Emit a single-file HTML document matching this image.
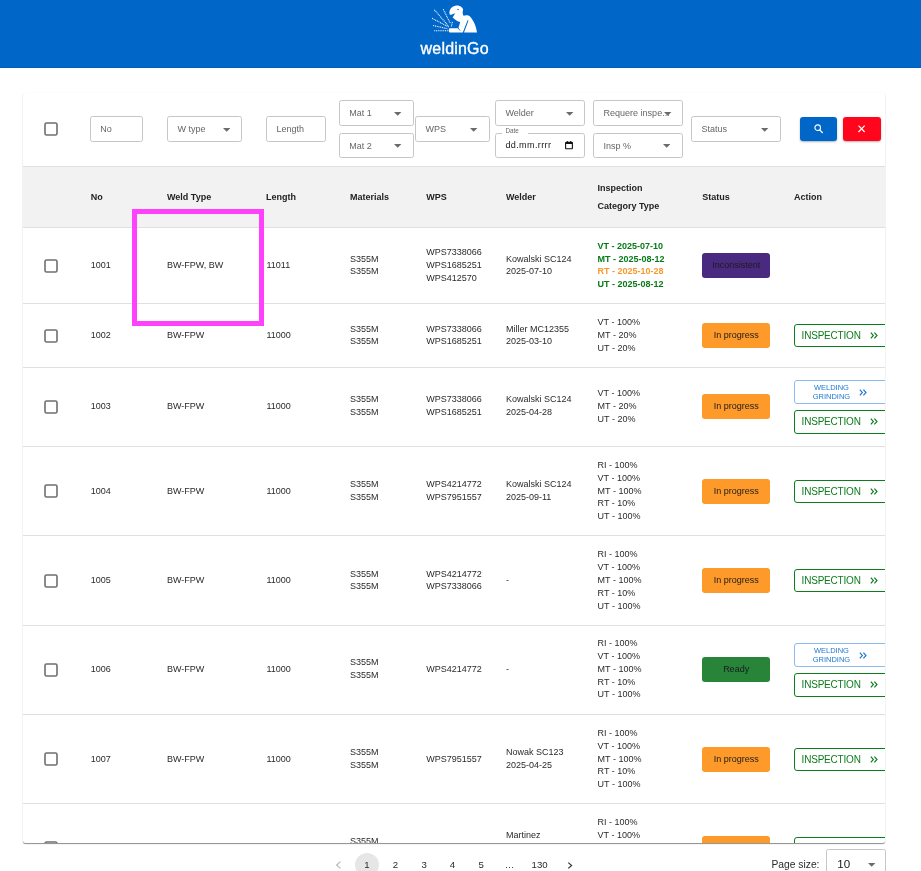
<!DOCTYPE html><html><head><meta charset="utf-8"><style>
*{box-sizing:border-box;margin:0;padding:0}
html,body{width:921px;height:871px;overflow:hidden;background:#fff;font-family:"Liberation Sans", sans-serif;color:rgba(0,0,0,0.87)}
.a{position:absolute}
.hdr{position:absolute;left:0;top:0;width:921px;height:68px;background:#0067c9;box-shadow:inset 0 -1px 0 rgba(0,0,0,0.1)}
.logo{position:absolute;left:420.6px;top:39.6px;font-size:16px;color:#fff;-webkit-text-stroke:0.35px #fff;letter-spacing:0.18px;line-height:18px}
.paper{position:absolute;left:22.5px;top:92.5px;width:862.8px;height:750.6px;border-radius:2.5px;background:#fff;overflow:hidden;
 box-shadow:0 1px 1px -0.2px rgba(0,0,0,0.45),0 0 1.5px rgba(0,0,0,0.07)}
.cb{position:absolute;width:14px;height:14px}
.inp{position:absolute;border:1px solid #c6c6c6;border-radius:2.5px;background:#fff}
.ph{position:absolute;font-size:9px;color:#666;line-height:10px;white-space:nowrap}
.arr{position:absolute;width:8px;height:4px}
.line{position:absolute;left:0;width:870px;height:1px;background:#e0e0e0}
.th{position:absolute;font-size:9px;font-weight:bold;line-height:12px;white-space:nowrap;color:#222}
.td{position:absolute;font-size:9px;line-height:12.86px;white-space:nowrap;color:#2a2a2a}
.badge{position:absolute;left:679.9px;width:67.5px;height:24.9px;border-radius:3px;font-size:9px;line-height:24.5px;text-align:center;color:#1c1c1c}
.bi{position:absolute;left:771.7px;width:110px;height:23px;border:1.2px solid #0b7d1b;border-radius:3px;color:#0b7d1b;font-size:10px;letter-spacing:-0.2px;line-height:21.6px;padding-left:6.4px;white-space:nowrap}
.bw{position:absolute;left:771.7px;width:110px;height:23.5px;border:1px solid #8dbbee;border-radius:3px;color:#1f78d1;font-size:7.5px;line-height:9px;white-space:nowrap}
.pg{position:absolute;top:859px;font-size:9.64px;line-height:12px;color:#2a2a2a;text-align:center;white-space:nowrap}
</style></head><body><div style="position:absolute;left:0;top:0;width:921px;height:871px;will-change:transform">
<div class="hdr">
<svg class="a" style="left:0;top:0" width="921" height="68" viewBox="0 0 921 68">
<g fill="#fff">
<path d="M449.6 14.2 C448.7 9.2 452.5 5.4 457.0 5.5 C460.5 5.6 462.9 7.6 463.0 10.0 L462.6 12.6 C462.8 14.0 463.2 15.3 463.6 15.8 C466.0 14.9 468.5 15.2 470.2 16.8 C473.6 20.5 476.2 26.5 477.0 32.5 L464.0 32.5 L468.5 20.6 L467.6 20.3 L462.8 32.5 L449.8 32.5 C448.6 32.2 448.2 30.2 449.4 28.3 L458.4 28.2 L460.2 22.0 C457.7 21.5 455.0 19.6 452.6 17.4 L455.2 13.2 L453.7 13.7 L451.2 14.7 C450.5 14.9 449.9 14.7 449.6 14.2 Z"/>
</g>
<circle cx="461.9" cy="9.6" r="1.05" fill="#fff"/>
<ellipse cx="458.1" cy="9.5" rx="0.9" ry="0.6" fill="#0067c9"/>
<line x1="457.8" y1="27.6" x2="460.1" y2="30.6" stroke="#0067c9" stroke-width="0.8"/>
<g stroke="#fff" stroke-width="1.05" stroke-dasharray="1.0 0.8" fill="none">
<line x1="434.4" y1="9.8" x2="448.7" y2="26.3"/>
<line x1="443.3" y1="9.3" x2="450.2" y2="23.2"/>
<line x1="432.1" y1="18.3" x2="448.7" y2="27.0"/>
<line x1="433.2" y1="25.5" x2="447.6" y2="28.8"/>
<line x1="434.2" y1="30.7" x2="448.3" y2="30.7"/>
<line x1="452.4" y1="21.9" x2="451.4" y2="26.3"/>
</g>
</svg>
<div class="logo">weldinGo</div>
</div>
<div class="paper">
<svg class="cb" style="left:21.5px;top:29.4px" viewBox="0 0 14 14"><rect x="1" y="1" width="12" height="12" rx="1.6" fill="none" stroke="#6f6f6f" stroke-width="1.6"/></svg>
<div class="inp" style="left:67.5px;top:23.1px;width:53.3px;height:26.4px"></div>
<div class="ph" style="left:77.8px;top:31.5px">No</div>
<div class="inp" style="left:144.6px;top:23.5px;width:74.9px;height:26.0px"></div>
<div class="ph" style="left:154.9px;top:31.7px">W type</div>
<svg class="arr" style="left:200.0px;top:35.2px" viewBox="0 0 8 4"><path d="M0 0 L7.4 0 L3.7 3.7 Z" fill="#6b6b6b"/></svg>
<div class="inp" style="left:243.7px;top:23.1px;width:60.0px;height:26.4px"></div>
<div class="ph" style="left:254.0px;top:31.5px">Length</div>
<div class="inp" style="left:316.4px;top:7.6px;width:75.2px;height:25.8px"></div>
<div class="ph" style="left:326.7px;top:15.7px">Mat 1</div>
<svg class="arr" style="left:371.7px;top:19.2px" viewBox="0 0 8 4"><path d="M0 0 L7.4 0 L3.7 3.7 Z" fill="#6b6b6b"/></svg>
<div class="inp" style="left:316.4px;top:40.5px;width:75.2px;height:24.8px"></div>
<div class="ph" style="left:326.7px;top:48.1px">Mat 2</div>
<svg class="arr" style="left:371.7px;top:51.6px" viewBox="0 0 8 4"><path d="M0 0 L7.4 0 L3.7 3.7 Z" fill="#6b6b6b"/></svg>
<div class="inp" style="left:392.7px;top:23.7px;width:75.0px;height:25.7px"></div>
<div class="ph" style="left:403.0px;top:31.75px">WPS</div>
<svg class="arr" style="left:447.8px;top:35.25px" viewBox="0 0 8 4"><path d="M0 0 L7.4 0 L3.7 3.7 Z" fill="#6b6b6b"/></svg>
<div class="inp" style="left:472.6px;top:7.5px;width:89.9px;height:25.8px"></div>
<div class="ph" style="left:482.9px;top:15.6px">Welder</div>
<svg class="arr" style="left:543.1px;top:19.1px" viewBox="0 0 8 4"><path d="M0 0 L7.4 0 L3.7 3.7 Z" fill="#6b6b6b"/></svg>
<div class="inp" style="left:570.8px;top:7.5px;width:89.8px;height:25.8px"></div>
<div class="ph" style="left:581.1px;top:15.6px">Requere inspe...</div>
<svg class="arr" style="left:641.2px;top:19.1px" viewBox="0 0 8 4"><path d="M0 0 L7.4 0 L3.7 3.7 Z" fill="#6b6b6b"/></svg>
<div class="inp" style="left:570.8px;top:40.8px;width:89.8px;height:24.6px"></div>
<div class="ph" style="left:581.1px;top:48.3px">Insp %</div>
<svg class="arr" style="left:640.9px;top:51.8px" viewBox="0 0 8 4"><path d="M0 0 L7.4 0 L3.7 3.7 Z" fill="#6b6b6b"/></svg>
<div class="inp" style="left:668.7px;top:23.4px;width:89.8px;height:26.0px"></div>
<div class="ph" style="left:679.0px;top:31.6px">Status</div>
<svg class="arr" style="left:738.5px;top:35.1px" viewBox="0 0 8 4"><path d="M0 0 L7.4 0 L3.7 3.7 Z" fill="#6b6b6b"/></svg>
<div class="inp" style="left:472.6px;top:40.8px;width:89.9px;height:24.6px"></div>
<div class="a" style="left:479.5px;top:39.5px;width:26px;height:3px;background:#fff"></div>
<div class="a" style="left:482.9px;top:34.9px;font-size:6.4px;line-height:7px;color:#6a6a6a">Date</div>
<div class="a" style="left:482.9px;top:47.7px;font-size:9.1px;line-height:11px;color:#222;letter-spacing:0.35px">dd.mm.rrrr</div>
<svg class="a" style="left:542.1px;top:48.9px" width="8" height="8.4" viewBox="0 0 8 8.4"><rect x="0.6" y="1.4" width="6.8" height="6.4" rx="0.6" fill="none" stroke="#111" stroke-width="1.1"/><rect x="0.6" y="1.2" width="6.8" height="1.8" fill="#111"/><rect x="1.8" y="0" width="1" height="1.6" fill="#111"/><rect x="5.2" y="0" width="1" height="1.6" fill="#111"/></svg>
<div class="a" style="left:777.6px;top:24.4px;width:36.9px;height:23.9px;background:#0067c9;border-radius:3px;box-shadow:0 1px 2px rgba(0,0,0,0.3)"></div>
<svg class="a" style="left:791.8px;top:31.3px" width="9.5" height="9.8" viewBox="0 0 9.5 9.8"><circle cx="3.7" cy="3.7" r="2.8" fill="none" stroke="#fff" stroke-width="1.1"/><line x1="5.7" y1="5.9" x2="8.7" y2="9" stroke="#fff" stroke-width="1.3"/></svg>
<div class="a" style="left:820.5px;top:24.4px;width:37.9px;height:23.9px;background:#ff061c;border-radius:3px;box-shadow:0 1px 2px rgba(0,0,0,0.3)"></div>
<svg class="a" style="left:835.9px;top:32.9px" width="7.2" height="7.6" viewBox="0 0 7.2 7.6"><path d="M0.5 0.6 L6.7 7 M6.7 0.6 L0.5 7" stroke="#fff" stroke-width="1.2"/></svg>
<div class="line" style="top:73.5px"></div>
<div class="line" style="top:134.5px"></div>
<div class="line" style="top:210.5px"></div>
<div class="line" style="top:274.5px"></div>
<div class="line" style="top:353.5px"></div>
<div class="line" style="top:442.5px"></div>
<div class="line" style="top:532.5px"></div>
<div class="line" style="top:621.5px"></div>
<div class="line" style="top:710.5px"></div>
<div class="a" style="left:0;top:74.5px;width:870px;height:60px;background:#f2f2f2"></div>
<div class="th" style="left:68.2px;top:98.68px">No</div>
<div class="th" style="left:144.5px;top:98.68px">Weld Type</div>
<div class="th" style="left:243.4px;top:98.68px">Length</div>
<div class="th" style="left:327.5px;top:98.68px">Materials</div>
<div class="th" style="left:403.8px;top:98.68px">WPS</div>
<div class="th" style="left:483.5px;top:98.68px">Welder</div>
<div class="th" style="left:575.0px;top:89.68px">Inspection</div>
<div class="th" style="left:575.0px;top:107.48px">Category Type</div>
<div class="th" style="left:679.7px;top:98.18px">Status</div>
<div class="th" style="left:771.5px;top:98.18px">Action</div>
<svg class="cb" style="left:21.5px;top:166.4px" viewBox="0 0 14 14"><rect x="1" y="1" width="12" height="12" rx="1.6" fill="none" stroke="#6f6f6f" stroke-width="1.6"/></svg>
<div class="td" style="left:68.2px;top:166.57px;">1001</div>
<div class="td" style="left:144.5px;top:166.57px;">BW-FPW, BW</div>
<div class="td" style="left:244.0px;top:166.57px;">11011</div>
<div class="td" style="left:327.5px;top:160.14px;">S355M<br>S355M</div>
<div class="td" style="left:403.8px;top:153.71px;">WPS7338066<br>WPS1685251<br>WPS412570</div>
<div class="td" style="left:483.5px;top:160.14px;">Kowalski SC124<br>2025-07-10</div>
<div class="td" style="left:575.1px;top:147.28px;font-weight:bold;"><span style="color:#077a17">VT - 2025-07-10</span><br><span style="color:#077a17">MT - 2025-08-12</span><br><span style="color:#f79a2e">RT - 2025-10-28</span><br><span style="color:#077a17">UT - 2025-08-12</span></div>
<div class="badge" style="top:160.7px;background:#4a2980">Inconsistent</div>
<svg class="cb" style="left:21.5px;top:236.4px" viewBox="0 0 14 14"><rect x="1" y="1" width="12" height="12" rx="1.6" fill="none" stroke="#6f6f6f" stroke-width="1.6"/></svg>
<div class="td" style="left:68.2px;top:236.57px;">1002</div>
<div class="td" style="left:144.5px;top:236.57px;">BW-FPW</div>
<div class="td" style="left:244.0px;top:236.57px;">11000</div>
<div class="td" style="left:327.5px;top:230.14px;">S355M<br>S355M</div>
<div class="td" style="left:403.8px;top:230.14px;">WPS7338066<br>WPS1685251</div>
<div class="td" style="left:483.5px;top:230.14px;">Miller MC12355<br>2025-03-10</div>
<div class="td" style="left:575.1px;top:223.71px;">VT - 100%<br>MT - 20%<br>UT - 20%</div>
<div class="badge" style="top:230.7px;background:#fd9a2a">In progress</div>
<div class="bi" style="top:231.5px">INSPECTION<span style="position:absolute;left:75px;top:7.3px"><svg width="8" height="7" viewBox="0 0 8 7" style="position:absolute"><path d="M0.8 0.7 L3.4 3.5 L0.8 6.3 M4.4 0.7 L7 3.5 L4.4 6.3" fill="none" stroke="#0b7d1b" stroke-width="1.15"/></svg></span></div>
<svg class="cb" style="left:21.5px;top:307.0px" viewBox="0 0 14 14"><rect x="1" y="1" width="12" height="12" rx="1.6" fill="none" stroke="#6f6f6f" stroke-width="1.6"/></svg>
<div class="td" style="left:68.2px;top:307.17px;">1003</div>
<div class="td" style="left:144.5px;top:307.17px;">BW-FPW</div>
<div class="td" style="left:244.0px;top:307.17px;">11000</div>
<div class="td" style="left:327.5px;top:300.74px;">S355M<br>S355M</div>
<div class="td" style="left:403.8px;top:300.74px;">WPS7338066<br>WPS1685251</div>
<div class="td" style="left:483.5px;top:300.74px;">Kowalski SC124<br>2025-04-28</div>
<div class="td" style="left:575.1px;top:294.31px;">VT - 100%<br>MT - 20%<br>UT - 20%</div>
<div class="badge" style="top:301.3px;background:#fd9a2a">In progress</div>
<div class="bw" style="top:287.7px"><div style="position:absolute;left:17.5px;top:1.6px;text-align:center;width:37.5px">WELDING<br>GRINDING</div><span style="position:absolute;left:64.3px;top:8.2px"><svg width="8" height="7" viewBox="0 0 8 7" style="position:absolute"><path d="M0.8 0.7 L3.4 3.5 L0.8 6.3 M4.4 0.7 L7 3.5 L4.4 6.3" fill="none" stroke="#1f78d1" stroke-width="1.15"/></svg></span></div>
<div class="bi" style="top:317.7px;height:23.9px">INSPECTION<span style="position:absolute;left:75px;top:7.3px"><svg width="8" height="7" viewBox="0 0 8 7" style="position:absolute"><path d="M0.8 0.7 L3.4 3.5 L0.8 6.3 M4.4 0.7 L7 3.5 L4.4 6.3" fill="none" stroke="#0b7d1b" stroke-width="1.15"/></svg></span></div>
<svg class="cb" style="left:21.5px;top:391.9px" viewBox="0 0 14 14"><rect x="1" y="1" width="12" height="12" rx="1.6" fill="none" stroke="#6f6f6f" stroke-width="1.6"/></svg>
<div class="td" style="left:68.2px;top:392.07px;">1004</div>
<div class="td" style="left:144.5px;top:392.07px;">BW-FPW</div>
<div class="td" style="left:244.0px;top:392.07px;">11000</div>
<div class="td" style="left:327.5px;top:385.64px;">S355M<br>S355M</div>
<div class="td" style="left:403.8px;top:385.64px;">WPS4214772<br>WPS7951557</div>
<div class="td" style="left:483.5px;top:385.64px;">Kowalski SC124<br>2025-09-11</div>
<div class="td" style="left:575.1px;top:366.35px;">RI - 100%<br>VT - 100%<br>MT - 100%<br>RT - 10%<br>UT - 100%</div>
<div class="badge" style="top:386.2px;background:#fd9a2a">In progress</div>
<div class="bi" style="top:387.0px">INSPECTION<span style="position:absolute;left:75px;top:7.3px"><svg width="8" height="7" viewBox="0 0 8 7" style="position:absolute"><path d="M0.8 0.7 L3.4 3.5 L0.8 6.3 M4.4 0.7 L7 3.5 L4.4 6.3" fill="none" stroke="#0b7d1b" stroke-width="1.15"/></svg></span></div>
<svg class="cb" style="left:21.5px;top:481.4px" viewBox="0 0 14 14"><rect x="1" y="1" width="12" height="12" rx="1.6" fill="none" stroke="#6f6f6f" stroke-width="1.6"/></svg>
<div class="td" style="left:68.2px;top:481.57px;">1005</div>
<div class="td" style="left:144.5px;top:481.57px;">BW-FPW</div>
<div class="td" style="left:244.0px;top:481.57px;">11000</div>
<div class="td" style="left:327.5px;top:475.14px;">S355M<br>S355M</div>
<div class="td" style="left:403.8px;top:475.14px;">WPS4214772<br>WPS7338066</div>
<div class="td" style="left:483.5px;top:481.57px;">-</div>
<div class="td" style="left:575.1px;top:455.85px;">RI - 100%<br>VT - 100%<br>MT - 100%<br>RT - 10%<br>UT - 100%</div>
<div class="badge" style="top:475.7px;background:#fd9a2a">In progress</div>
<div class="bi" style="top:476.5px">INSPECTION<span style="position:absolute;left:75px;top:7.3px"><svg width="8" height="7" viewBox="0 0 8 7" style="position:absolute"><path d="M0.8 0.7 L3.4 3.5 L0.8 6.3 M4.4 0.7 L7 3.5 L4.4 6.3" fill="none" stroke="#0b7d1b" stroke-width="1.15"/></svg></span></div>
<svg class="cb" style="left:21.5px;top:570.0px" viewBox="0 0 14 14"><rect x="1" y="1" width="12" height="12" rx="1.6" fill="none" stroke="#6f6f6f" stroke-width="1.6"/></svg>
<div class="td" style="left:68.2px;top:570.17px;">1006</div>
<div class="td" style="left:144.5px;top:570.17px;">BW-FPW</div>
<div class="td" style="left:244.0px;top:570.17px;">11000</div>
<div class="td" style="left:327.5px;top:563.74px;">S355M<br>S355M</div>
<div class="td" style="left:403.8px;top:570.17px;">WPS4214772</div>
<div class="td" style="left:483.5px;top:570.17px;">-</div>
<div class="td" style="left:575.1px;top:544.45px;">RI - 100%<br>VT - 100%<br>MT - 100%<br>RT - 10%<br>UT - 100%</div>
<div class="badge" style="top:564.3px;background:#278439">Ready</div>
<div class="bw" style="top:550.7px"><div style="position:absolute;left:17.5px;top:1.6px;text-align:center;width:37.5px">WELDING<br>GRINDING</div><span style="position:absolute;left:64.3px;top:8.2px"><svg width="8" height="7" viewBox="0 0 8 7" style="position:absolute"><path d="M0.8 0.7 L3.4 3.5 L0.8 6.3 M4.4 0.7 L7 3.5 L4.4 6.3" fill="none" stroke="#1f78d1" stroke-width="1.15"/></svg></span></div>
<div class="bi" style="top:580.7px;height:23.9px">INSPECTION<span style="position:absolute;left:75px;top:7.3px"><svg width="8" height="7" viewBox="0 0 8 7" style="position:absolute"><path d="M0.8 0.7 L3.4 3.5 L0.8 6.3 M4.4 0.7 L7 3.5 L4.4 6.3" fill="none" stroke="#0b7d1b" stroke-width="1.15"/></svg></span></div>
<svg class="cb" style="left:21.5px;top:659.9px" viewBox="0 0 14 14"><rect x="1" y="1" width="12" height="12" rx="1.6" fill="none" stroke="#6f6f6f" stroke-width="1.6"/></svg>
<div class="td" style="left:68.2px;top:660.07px;">1007</div>
<div class="td" style="left:144.5px;top:660.07px;">BW-FPW</div>
<div class="td" style="left:244.0px;top:660.07px;">11000</div>
<div class="td" style="left:327.5px;top:653.64px;">S355M<br>S355M</div>
<div class="td" style="left:403.8px;top:660.07px;">WPS7951557</div>
<div class="td" style="left:483.5px;top:653.64px;">Nowak SC123<br>2025-04-25</div>
<div class="td" style="left:575.1px;top:634.35px;">RI - 100%<br>VT - 100%<br>MT - 100%<br>RT - 10%<br>UT - 100%</div>
<div class="badge" style="top:654.2px;background:#fd9a2a">In progress</div>
<div class="bi" style="top:655.0px">INSPECTION<span style="position:absolute;left:75px;top:7.3px"><svg width="8" height="7" viewBox="0 0 8 7" style="position:absolute"><path d="M0.8 0.7 L3.4 3.5 L0.8 6.3 M4.4 0.7 L7 3.5 L4.4 6.3" fill="none" stroke="#0b7d1b" stroke-width="1.15"/></svg></span></div>
<svg class="cb" style="left:21.5px;top:748.9px" viewBox="0 0 14 14"><rect x="1" y="1" width="12" height="12" rx="1.6" fill="none" stroke="#6f6f6f" stroke-width="1.6"/></svg>
<div class="td" style="left:68.2px;top:749.07px;">1008</div>
<div class="td" style="left:144.5px;top:749.07px;">BW-FPW</div>
<div class="td" style="left:244.0px;top:749.07px;">11000</div>
<div class="td" style="left:327.5px;top:742.64px;">S355M<br>S355M</div>
<div class="td" style="left:403.8px;top:749.07px;">WPS4214772</div>
<div class="td" style="left:483.5px;top:736.21px;">Martinez<br>SC125<br>2025-05-02</div>
<div class="td" style="left:575.1px;top:723.35px;">RI - 100%<br>VT - 100%<br>MT - 100%<br>RT - 10%<br>UT - 100%</div>
<div class="badge" style="top:743.2px;background:#fd9a2a">In progress</div>
<div class="bi" style="top:744.0px">INSPECTION<span style="position:absolute;left:75px;top:7.3px"><svg width="8" height="7" viewBox="0 0 8 7" style="position:absolute"><path d="M0.8 0.7 L3.4 3.5 L0.8 6.3 M4.4 0.7 L7 3.5 L4.4 6.3" fill="none" stroke="#0b7d1b" stroke-width="1.15"/></svg></span></div>
</div>
<div class="a" style="left:132px;top:209px;width:132px;height:117px;border:5px solid #ff40fc"></div>
<svg class="a" style="left:335px;top:861px" width="7" height="8" viewBox="0 0 7 8"><path d="M5.5 0.6 L1.6 4 L5.5 7.4" fill="none" stroke="#b5b5b5" stroke-width="1.1"/></svg>
<div class="a" style="left:355px;top:853px;width:24px;height:24px;border-radius:50%;background:#e6e6e6"></div>
<div class="pg" style="left:352px;width:30px">1</div>
<div class="pg" style="left:380.5px;width:30px">2</div>
<div class="pg" style="left:409.1px;width:30px">3</div>
<div class="pg" style="left:437.5px;width:30px">4</div>
<div class="pg" style="left:466.2px;width:30px">5</div>
<div class="pg" style="left:494.6px;width:30px">…</div>
<div class="pg" style="left:524.6px;width:30px">130</div>
<svg class="a" style="left:566.5px;top:861.5px" width="7" height="7" viewBox="0 0 7 7"><path d="M1.3 0.6 L4.6 3.5 L1.3 6.4" fill="none" stroke="#333" stroke-width="1.2"/></svg>
<div class="a" style="left:771.4px;top:858.6px;font-size:10.3px;line-height:12px;color:#2a2a2a">Page size:</div>
<div class="inp" style="left:826.2px;top:849.2px;width:59.4px;height:40px"></div>
<div class="a" style="left:837.3px;top:856.8px;font-size:11.6px;line-height:14px;color:#1a1a1a">10</div>
<svg class="arr" style="left:868.2px;top:862.8px" viewBox="0 0 8 4"><path d="M0 0 L7.4 0 L3.7 3.7 Z" fill="#6b6b6b"/></svg>
</div></body></html>
